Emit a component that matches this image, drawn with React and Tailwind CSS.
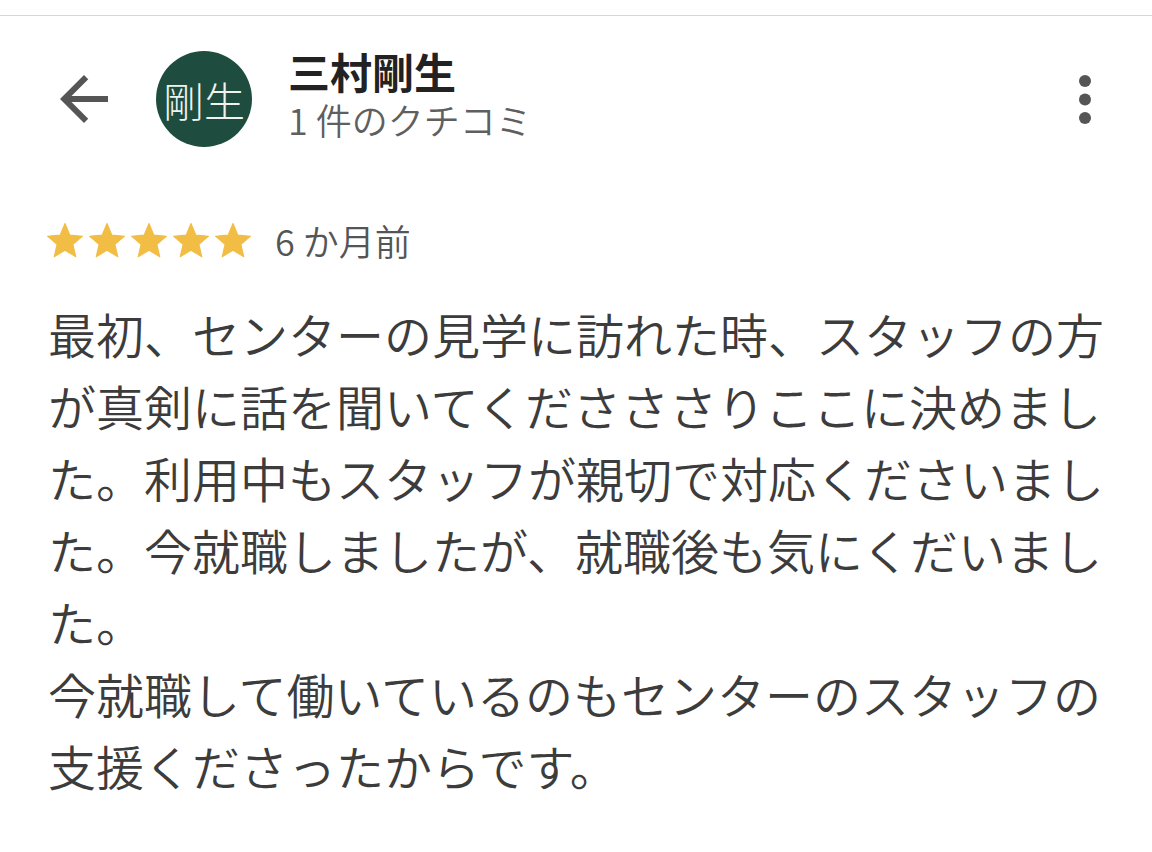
const FONT = "font-['Noto_Sans_CJK_JP','Noto_Sans',sans-serif]";

function ArrowBack() {
  return (
    <svg viewBox="0 0 24 24" className="w-[72px] h-[72px]" fill="#555555">
      <path d="M20 11H7.83l5.59-5.59L12 4l-8 8 8 8 1.41-1.41L7.83 13H20v-2z" />
    </svg>
  );
}

function MoreVert() {
  return (
    <svg viewBox="0 0 40 60" className="w-[40px] h-[60px]" fill="#555555">
      <circle cx="20" cy="12" r="6" />
      <circle cx="20" cy="30.5" r="6" />
      <circle cx="20" cy="49" r="6" />
    </svg>
  );
}

function Star() {
  return (
    <svg viewBox="0 0 24 24" className="w-[42px] h-[42px]" fill="#f2bd45">
      <path
        d="M12 17.27L18.18 21l-1.64-7.03L22 9.24l-7.19-.61L12 2 9.19 8.63 2 9.24l5.46 4.73L5.82 21z"
        stroke="#f2bd45"
        strokeWidth="0.6"
        strokeLinejoin="round"
      />
    </svg>
  );
}

const review =
  "最初、センターの見学に訪れた時、スタッフの方が真剣に話を聞いてくださささりここに決めました。利用中もスタッフが親切で対応くださいました。今就職しましたが、就職後も気にくだいました。\n今就職して働いているのもセンターのスタッフの支援くださったからです。";

export default function App() {
  return (
    <div className={`w-[1152px] h-[852px] bg-white overflow-hidden ${FONT}`}>
      <div className="h-[15px]" />
      <div className="border-t border-[#d6d6d6]" />

      {/* Header */}
      <div className="flex items-start h-[131px]">
        <div className="ml-[48px] mt-[47px]">
          <ArrowBack />
        </div>
        <div className="ml-[36px] mt-[35px] w-[96px] h-[96px] rounded-full bg-[#1e4d3f] flex items-center justify-center">
          <span className="text-[41px] leading-none text-[#eef3ef] font-light">剛生</span>
        </div>
        <div className="ml-[36px] mt-[33px] flex flex-col">
          <p className="text-[42px] leading-[44px] font-bold text-[#222222]">三村剛生</p>
          <p className="mt-[5px] text-[36px] leading-[42px] font-[350] text-[#5f5f5f]">1 件のクチコミ</p>
        </div>
        <div className="ml-auto mr-[47px] mt-[53px]">
          <MoreVert />
        </div>
      </div>

      {/* Rating row */}
      <div className="mt-[73px] flex items-center h-[42px] pl-[44px]">
        <div className="flex">
          <Star />
          <Star />
          <Star />
          <Star />
          <Star />
        </div>
        <span className="ml-[21px] -mt-[3px] text-[36px] leading-[42px] font-[350] text-[#555555]">6 か月前</span>
      </div>

      {/* Review body */}
      <p className="mt-[35px] pl-[48px] pr-[40px] text-[48px] leading-[72px] font-[350] text-[#3c3c3c] whitespace-pre-line">
        {review}
      </p>
    </div>
  );
}
